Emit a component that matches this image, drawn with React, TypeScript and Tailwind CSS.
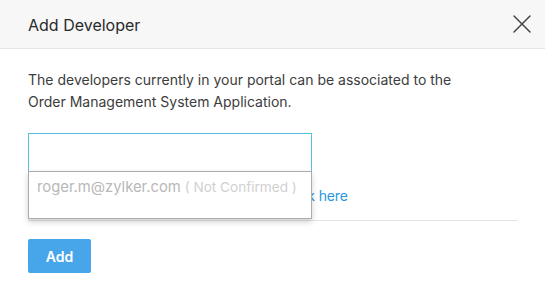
import { X } from 'lucide-react'

export default function App() {
  return (
    <div className="w-[545px] h-[296px] bg-white font-['Inter',sans-serif] text-[#333]">
      <div className="h-[49px] bg-[#f7f7f7] border-b border-[#e6e6e6] flex items-center justify-between pl-7 pr-[7px]">
        <h1 className="text-[16px] text-[#2a2a2a] pt-px">Add Developer</h1>
        <X className="w-[32px] h-[32px] text-[#444]" strokeWidth={1.1} />
      </div>

      <div className="px-7 pt-[20px]">
        <p className="text-[14px] leading-[22px] text-[#3c3c3c]">
          The developers currently in your portal can be associated to the
          <br />
          Order Management System Application.
        </p>

        <div className="relative mt-[20px] border-b border-[#e4e4e4] pb-[14px] w-[490px]">
          <input
            className="block w-[284px] h-[39px] border border-[#54c2dc] outline-none px-2 text-[14px]"
            readOnly
          />
          <p className="mt-[13px] text-[14px] text-[#777] tracking-[-0.1px]">
            To invite a new developer to the portal,{' '}
            <span className="text-[#2b95e0]">click here</span>
          </p>

          <div className="absolute left-0 top-[38px] w-[284px] h-[48px] bg-white border border-[#ababab] shadow-[0_3px_6px_rgba(0,0,0,0.18)] px-2 pt-[2px]">
            <span className="text-[14.8px] text-[#b8b8b8]">roger.m@zylker.com</span>
            <span className="text-[13.6px] text-[#d0d0d0]"> ( Not Confirmed )</span>
          </div>
        </div>

        <button className="mt-[18px] w-[63px] h-[34px] bg-[#47a5e9] rounded-[2px] text-white text-[14px] font-semibold">
          Add
        </button>
      </div>
    </div>
  )
}
